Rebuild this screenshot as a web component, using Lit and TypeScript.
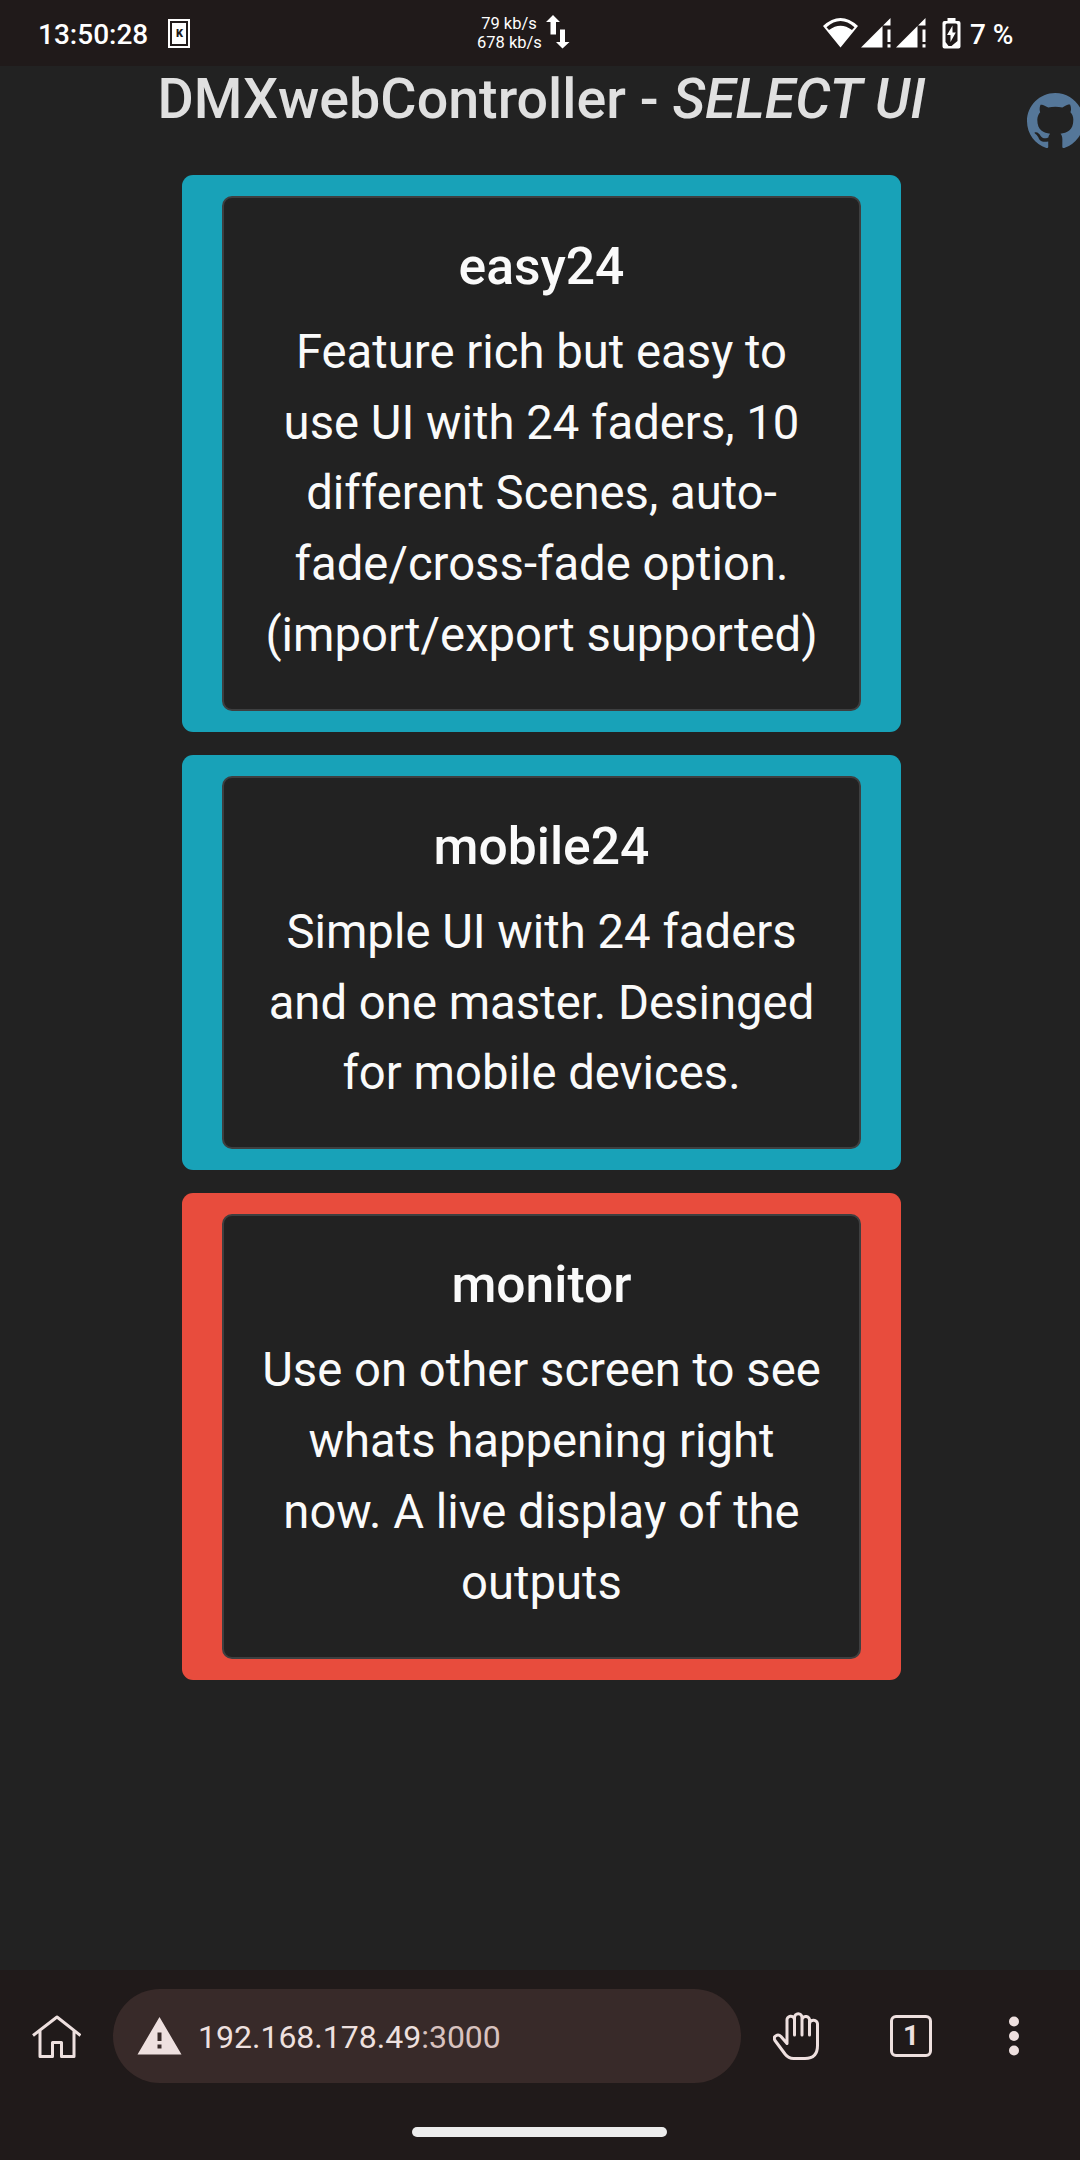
import { LitElement, html, css } from "lit";
import { customElement, property } from "lit/decorators.js";

@customElement("status-bar")
class StatusBar extends LitElement {
  static styles = css`
    :host { display: flex; align-items: center; box-sizing: border-box; height: 66px; padding-left: 38px; background: #201a1a; color: #fff; font: 500 28px/33px Roboto, sans-serif; }
    svg { display: block; flex: none; }
    .time { width: 130px; padding-top: 2px; white-space: nowrap; }
    .net { width: 64px; margin-left: 287px; font-weight: 400; font-size: 16.5px; line-height: 19.3px; text-align: center; white-space: nowrap; }
    .arrows { margin: 0 253px 2px 5px; }
    .signal { margin-left: 2px; }
    .signal + .signal { margin-left: 5px; }
    .battery { margin: 0 9px 0 16px; }
    .level { padding-top: 2px; }
    .glyph { font: 900 11px Roboto, sans-serif; }
  `;
  signal() {
    return html`<svg class="signal" width="30" height="30" viewBox="0 0 30 30" fill="#fff"><path d="M0 29.500 21.500 8V29.500Z M22 7.500 29.500 0V7.500Z M26.500 11.500h3v12.500h-3Z M26.500 26.200h3v3.300h-3Z"/></svg>`;
  }
  render() {
    return html`
      <span class="time">13:50:28</span>
      <svg width="22" height="29" viewBox="0 0 22 29"><rect x="1" y="1" width="20" height="27" fill="none" stroke="#fff" stroke-width="2"/><rect x="4" y="4" width="14" height="21" fill="#fff"/><text class="glyph" x="11.400" y="18" text-anchor="middle" fill="#201a1a">K</text></svg>
      <div class="net">79 kb/s<br>678 kb/s</div>
      <svg class="arrows" width="24" height="34" viewBox="0 0 24 34" fill="#fff"><path d="M7 0 14 7H10V19.500H4.500V7H0Z M14 14.500H19V27H23.500L16.500 33.500 10 27H14Z"/></svg>
      <svg width="36" height="30" viewBox="0 0 36 30"><path fill="#fff" fill-rule="evenodd" d="M0 8Q17.500-8 35 8L17.500 29.500Z M3.500 9.200 6 12Q17.500 3.500 29 12L31.500 9.200Q17.500-3 3.500 9.200Z"/></svg>
      ${this.signal()}${this.signal()}
      <svg class="battery" width="19" height="31" viewBox="0 0 19 31"><path fill="#fff" fill-rule="evenodd" d="M5.500 0h8v3H16.500Q18.500 3 18.500 5V28.500Q18.500 30.500 16.500 30.500H2.500Q.5 30.500 .5 28.500V5Q.5 3 2.500 3H5.500Z M3.500 7V24L6.500 28H9.500L15.500 23V7Q15.500 5.500 14 5.500H5Q3.500 5.500 3.500 7Z"/><path fill="#fff" d="M10.500 7.500 5 17H8.500V24L13.800 14.500H10.500Z"/></svg>
      <span class="level">7 %</span>`;
  }
}

@customElement("ui-card")
class UiCard extends LitElement {
  @property() heading = "";
  @property({ attribute: false }) lines: string[] = [];
  @property({ reflect: true }) tone = "info";
  static styles = css`
    :host { display: block; box-sizing: border-box; width: 719px; padding: 21px 40px; border-radius: 11px; background: #18a2b8; }
    :host([tone="danger"]) { background: #e84c3d; }
    .card { box-sizing: border-box; padding: 34px 0 38.200px; border: 2px solid #3e3f40; border-radius: 10px; background: #222; color: #fafafa; text-align: center; white-space: nowrap; }
    .heading { margin: 0 0 15.800px; font-size: 51.600px; font-weight: 500; line-height: 69px; }
    .text { margin: 0; font-size: 47.250px; line-height: 70.800px; }
    .line { display: block; }
  `;
  render() {
    return html`<div class="card"><h5 class="heading">${this.heading}</h5>
      <p class="text">${this.lines.map((l) => html`<span class="line">${l}</span>`)}</p></div>`;
  }
}

@customElement("browser-bar")
class BrowserBar extends LitElement {
  static styles = css`
    :host { display: flex; flex-direction: column; align-items: center; box-sizing: border-box; height: 190px; padding-top: 19px; background: #201a1a; }
    svg { display: block; flex: none; }
    .row { display: flex; align-items: center; box-sizing: border-box; width: 1080px; height: 94px; padding-left: 32px; }
    .pill { display: flex; align-items: center; box-sizing: border-box; width: 628px; height: 94px; margin: 0 32px; padding-left: 24px; border-radius: 47px; background: #382a29; color: #eee0df; font: 400 32px/38px Roboto, sans-serif; }
    .url { margin-left: 16px; padding-top: 1px; }
    .port { color: #d8c2bf; }
    .tabs { display: flex; align-items: center; justify-content: center; box-sizing: border-box; width: 42px; height: 42px; margin: 0 77px 0 71px; border: 3px solid #eee0df; border-radius: 6px; color: #eee0df; font: 700 28px/30px Roboto, sans-serif; }
    .handle { width: 255px; height: 10px; margin: 44px 2px 0 0; border-radius: 5px; background: #ececec; }
  `;
  render() {
    return html`
      <div class="row">
        <svg width="49" height="44" viewBox="0 0 49 44" fill="none" stroke="#eee0df" stroke-width="3"><path d="M1 21.500 25 3 48.500 21.500M8 17V42.500H20.500V28.500H29.500V42.500H42V17" stroke-linejoin="round"/></svg>
        <div class="pill">
          <svg width="45" height="38" viewBox="0 0 45 38"><path fill="#eee0df" fill-rule="evenodd" d="M22.500 0 44.500 37.500H.5Z M20.500 15.500V24H24.500V15.500Z M20.500 27.500V31.500H24.500V27.500Z"/></svg>
          <span class="url">192.168.178.49<span class="port">:3000</span></span>
        </div>
        <svg width="46" height="48" viewBox="0 0 46 48" fill="none" stroke="#eee0df" stroke-width="3" stroke-linecap="round" stroke-linejoin="round"><path d="M21.500 23V5.500a3.750 3.750 0 0 1 7.500 0V23M29 23V8M29 7.500a3.500 3.500 0 0 1 7.500 1.500V23M36.500 12a3.800 3.800 0 0 1 8 .5V33.500Q44.500 46.500 32 46.500H20.500Q15.500 46.500 12 42L2 28.500C-.5 24 5 21.500 8 24.500L14 31.500V8.500a3.750 3.750 0 0 1 7.500-1"/></svg>
        <div class="tabs">1</div>
        <svg width="10" height="40" viewBox="0 0 10 40" fill="#eee0df"><circle cx="5" cy="5.500" r="5"/><circle cx="5" cy="20" r="5"/><circle cx="5" cy="34.500" r="5"/></svg>
      </div>
      <div class="handle"></div>`;
  }
}

@customElement("app-root")
class AppRoot extends LitElement {
  static styles = css`
    :host { display: flex; flex-direction: column; width: 1080px; height: 2160px; overflow: hidden; background: #222; font-family: Roboto, sans-serif; }
    .page { position: relative; display: flex; flex: 1; flex-direction: column; align-items: center; gap: 23px; padding-left: 3px; }
    .title { box-sizing: border-box; height: 86px; margin: 0; padding-top: 1px; color: #e0e0e0; font-size: 55.600px; font-weight: 500; line-height: 64px; white-space: nowrap; }
    .github { position: absolute; top: 27px; left: 1027px; }
  `;
  render() {
    return html`
      <status-bar></status-bar>
      <main class="page">
        <h1 class="title">DMXwebController - <i>SELECT UI</i></h1>
        <svg class="github" width="56.500" height="56.500" viewBox="0 0 16 16" fill="#557799"><path d="M8 0C3.580 0 0 3.580 0 8c0 3.540 2.290 6.530 5.470 7.590.4.070.55-.17.55-.38 0-.19-.01-.82-.01-1.490-2.010.37-2.530-.49-2.690-.94-.09-.23-.48-.94-.82-1.130-.28-.15-.68-.52-.01-.53.630-.01 1.080.580 1.230.820.720 1.210 1.870.870 2.330.660.070-.52.280-.87.510-1.070-1.780-.2-3.640-.89-3.640-3.950 0-.87.310-1.590.820-2.150-.08-.2-.36-1.020.080-2.120 0 0 .670-.21 2.200.820.640-.18 1.320-.27 2-.27s1.360.090 2 .270c1.530-1.040 2.200-.82 2.200-.82.440 1.100.160 1.920.080 2.120.510.560.820 1.270.820 2.150 0 3.070-1.870 3.750-3.650 3.950.290.250.540.730.540 1.480 0 1.070-.01 1.930-.01 2.200 0 .210.150.460.550.380A8.010 8.010 0 0 0 16 8c0-4.420-3.580-8-8-8Z"/></svg>
        <ui-card heading="easy24" .lines=${["Feature rich but easy to", "use UI with 24 faders, 10", "different Scenes, auto-", "fade/cross-fade option.", "(import/export supported)"]}></ui-card>
        <ui-card heading="mobile24" .lines=${["Simple UI with 24 faders", "and one master. Desinged", "for mobile devices."]}></ui-card>
        <ui-card heading="monitor" tone="danger" .lines=${["Use on other screen to see", "whats happening right", "now. A live display of the", "outputs"]}></ui-card>
      </main>
      <browser-bar></browser-bar>`;
  }
}
